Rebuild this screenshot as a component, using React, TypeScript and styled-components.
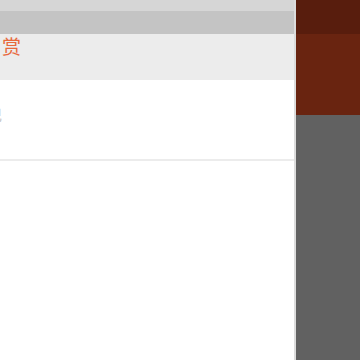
import React from "react"
import styled, { createGlobalStyle } from "styled-components"

const Global = createGlobalStyle`
    html, body {
        margin: 0;
        padding: 0;
        width: 360px;
        height: 360px;
        overflow: hidden;
        font-family: "Noto Sans CJK SC", "Noto Sans", sans-serif;
    }
`

const App = () => {
    return (
        <Page>
            <Global />
            <Main>
                <StatusBar />
                <TitleBar />
                <TabRow>
                    <TabLabel>赏</TabLabel>
                </TabRow>
                <InfoRow>
                    <InfoText>记</InfoText>
                </InfoRow>
                <Rest />
            </Main>
            <Drawer>
                <DrawerTop />
                <DrawerHead />
                <DrawerBody />
            </Drawer>
        </Page>
    )
}

export default App

const Page = styled.div`
    width: 360px;
    height: 360px;
    display: flex;
    overflow: hidden;
`

const Main = styled.div`
    width: 294px;
    display: flex;
    flex-direction: column;
    overflow: hidden;
    background-color: #ffffff;
`

const StatusBar = styled.div`
    height: 11px;
    background-color: #d6d6d6;
`

const TitleBar = styled.div`
    height: 23px;
    background-color: #c4c4c4;
`

const TabRow = styled.div`
    height: 46px;
    background-color: #ececec;
    display: flex;
    align-items: flex-start;
`

const TabLabel = styled.span`
    margin-top: 0px;
    margin-left: 2px;
    font-size: 19px;
    line-height: 24px;
    color: #e8693c;
`

const InfoRow = styled.div`
    box-sizing: border-box;
    height: 81px;
    padding-bottom: 12px;
    border-bottom: 2px solid #ececec;
    display: flex;
    align-items: center;
`

const InfoText = styled.span`
    margin-left: -14px;
    font-size: 16px;
    color: #c8c8c8;
`

const Rest = styled.div`
    flex: 1;
    background-color: #ffffff;
`

const Drawer = styled.div`
    flex: 1;
    display: flex;
    flex-direction: column;
    border-left: 2px solid #dcdcdc;
`

const DrawerTop = styled.div`
    height: 34px;
    background-color: #581d0d;
`

const DrawerHead = styled.div`
    height: 81px;
    background-color: #692410;
`

const DrawerBody = styled.div`
    flex: 1;
    background-color: #616161;
`
